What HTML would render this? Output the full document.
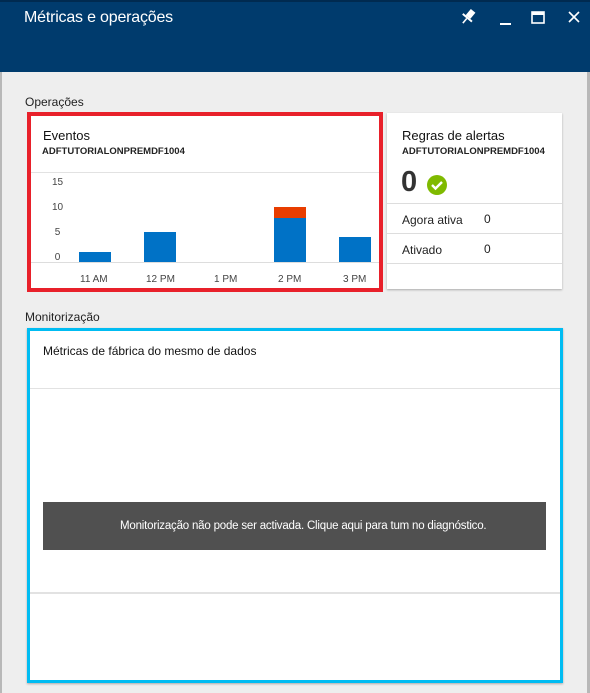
<!DOCTYPE html>
<html><head><meta charset="utf-8"><style>
*{margin:0;padding:0;box-sizing:border-box}
body{width:590px;height:693px;overflow:hidden;background:#eeeeee;font-family:"Liberation Sans",Arial,sans-serif;position:relative}
.a{position:absolute}
</style></head><body>
<div class="a" style="left:0;top:0;width:2px;height:693px;background:#b8b8b8"></div>
<div class="a" style="left:587px;top:0;width:3px;height:693px;background:#b8b8b8"></div>
<div class="a" style="left:0;top:0;width:590px;height:72px;background:#003b6d;border-top:2px solid #002a50"></div>
<div class="a" style="left:24px;top:9px;color:#fff;font-size:16px;letter-spacing:-0.2px">Métricas e operações</div>
<svg class="a" style="left:458px;top:8px" width="125" height="18">
<g transform="rotate(40 10 9)" fill="#fff"><rect x="7" y="1" width="6" height="8"/><rect x="4" y="9" width="12" height="2"/><rect x="9.2" y="11" width="1.6" height="6"/></g>
<rect x="42" y="15" width="11" height="2" fill="#fff"/>
<rect x="74" y="4" width="12" height="11" fill="none" stroke="#fff" stroke-width="1.6"/><rect x="74" y="4" width="12" height="3" fill="#fff"/>
<path d="M111 4l10 10M121 4l-10 10" stroke="#fff" stroke-width="1.6"/>
</svg>
<div class="a" style="left:25px;top:95px;font-size:12px;color:#222">Operações</div>
<div class="a" style="left:27px;top:112px;width:356px;height:180px;border:4px solid #e8202a;background:#fff"></div>
<div class="a" style="left:43px;top:128px;font-size:13px;color:#111">Eventos</div>
<div class="a" style="left:42px;top:146px;font-size:9.5px;font-weight:bold;color:#222">ADFTUTORIALONPREMDF1004</div>
<div class="a" style="left:31px;top:172px;width:348px;height:1px;background:#e2e2e2"></div>
<div class="a" style="left:52px;top:170px;font-size:10px;color:#444;line-height:25px;text-align:left">15<br>10<br>&nbsp;5<br>&nbsp;0</div>
<div class="a" style="left:31px;top:262px;width:348px;height:1px;background:#ddd"></div>
<div class="a" style="left:79px;top:252px;width:32px;height:10px;background:#0072c6"></div>
<div class="a" style="left:144px;top:232px;width:32px;height:30px;background:#0072c6"></div>
<div class="a" style="left:274px;top:207px;width:32px;height:11px;background:#e83d00"></div>
<div class="a" style="left:274px;top:218px;width:32px;height:44px;background:#0072c6"></div>
<div class="a" style="left:339px;top:237px;width:32px;height:25px;background:#0072c6"></div>
<div class="a" style="left:0;top:274px;font-size:10px;color:#444">
<span class="a" style="left:80px;white-space:nowrap">11 AM</span><span class="a" style="left:146px;white-space:nowrap">12 PM</span><span class="a" style="left:214px;white-space:nowrap">1 PM</span><span class="a" style="left:278px;white-space:nowrap">2 PM</span><span class="a" style="left:343px;white-space:nowrap">3 PM</span></div>
<div class="a" style="left:387px;top:113px;width:175px;height:176px;background:#fff;box-shadow:0 1px 2px #aaa"></div>
<div class="a" style="left:402px;top:128px;font-size:13px;color:#111">Regras de alertas</div>
<div class="a" style="left:402px;top:146px;font-size:9.5px;font-weight:bold;color:#222">ADFTUTORIALONPREMDF1004</div>
<div class="a" style="left:401px;top:166px;font-size:29px;font-weight:bold;color:#333">0</div>
<svg class="a" style="left:426px;top:174px" width="22" height="22"><circle cx="11" cy="11" r="10" fill="#7fba00"/><path d="M6 11l3.5 3.5L16 8" stroke="#fff" stroke-width="2.4" fill="none"/></svg>
<div class="a" style="left:387px;top:203px;width:175px;height:1px;background:#ddd"></div>
<div class="a" style="left:387px;top:233px;width:175px;height:1px;background:#ddd"></div>
<div class="a" style="left:387px;top:263px;width:175px;height:1px;background:#ddd"></div>
<div class="a" style="left:402px;top:213px;font-size:12px;color:#222">Agora ativa</div>
<div class="a" style="left:484px;top:212px;font-size:12px;color:#222">0</div>
<div class="a" style="left:402px;top:243px;font-size:12px;color:#222">Ativado</div>
<div class="a" style="left:484px;top:242px;font-size:12px;color:#222">0</div>
<div class="a" style="left:25px;top:310px;font-size:12px;color:#222">Monitorização</div>
<div class="a" style="left:27px;top:328px;width:536px;height:355px;border:3px solid #00bcf2;background:#fff;box-shadow:0 1px 2px #aaa"></div>
<div class="a" style="left:43px;top:344px;font-size:12px;color:#111">Métricas de fábrica do mesmo de dados</div>
<div class="a" style="left:30px;top:388px;width:530px;height:1px;background:#e2e2e2"></div>
<div class="a" style="left:30px;top:592px;width:530px;height:2px;background:#e2e2e2"></div>
<div class="a" style="left:43px;top:502px;width:503px;height:48px;background:#505050;color:#fff;font-size:11.5px;line-height:48px;padding-left:77px;letter-spacing:-0.2px">Monitorização não pode ser activada. Clique aqui para tum no diagnóstico.</div>
</body></html>
